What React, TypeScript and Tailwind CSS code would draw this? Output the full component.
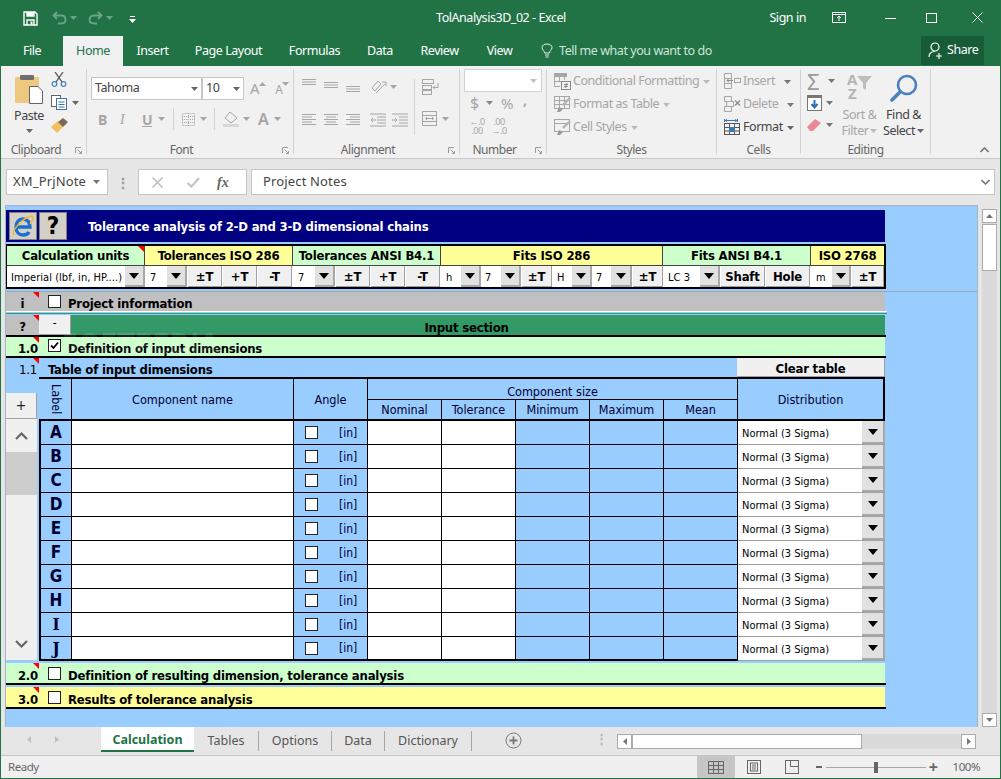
import { ReactNode } from 'react';

const uiFont = "font-['Noto_Sans',sans-serif] tracking-[-0.45px]";
const sheetFont = "font-['DejaVu_Sans',sans-serif] font-stretch-condensed tracking-[-0.2px]";

const OFF = '#a6a6a6';

function Caret({ color = '#777', className = '' }: { color?: string; className?: string }) {
    return (
        <svg width="7" height="4" viewBox="0 0 7 4" className={className}>
            <polygon points="0,0 7,0 3.5,4" fill={color} />
        </svg>
    );
}

function Lines({ rows, color = OFF }: { rows: [number, number, number][]; color?: string }) {
    return (
        <svg width="16" height="14" viewBox="0 0 16 14">
            {rows.map(([x, y, w], i) => (
                <rect key={i} x={x} y={y} width={w} height="1" fill={color} />
            ))}
        </svg>
    );
}

function GridIcon({ color = OFF }: { color?: string }) {
    return (
        <svg width="16" height="16" viewBox="0 0 16 16" fill="none" stroke={color}>
            <rect x="0.5" y="2.5" width="15" height="12" />
            <path d="M0.5 6.5H15.5M0.5 10.5H15.5M5.5 2.5V14.5M10.5 2.5V14.5" />
        </svg>
    );
}

function CondIcon() {
    return (
        <svg width="17" height="17" viewBox="0 0 17 17" fill="none" stroke={OFF}>
            <rect x="0" y="0" width="13" height="4" fill={OFF} stroke="none" />
            <path d="M0.5 4V13.5H6M5.5 4V8M10.5 4V7M0.5 8.5H7" />
            <rect x="7.5" y="8.5" width="9" height="8" fill="#f1f1f1" stroke="#8a8a8a" />
            <path d="M10 11.5H14M10 13.5H14M13 10L11 15" stroke="#8a8a8a" />
        </svg>
    );
}

function TableBrushIcon() {
    return (
        <svg width="17" height="17" viewBox="0 0 17 17" fill="none" stroke={OFF}>
            <rect x="0.5" y="0.5" width="15" height="12" />
            <path d="M0.5 4.5H15.5M0.5 8.5H15.5M5.5 0.5V12.5M10.5 0.5V12.5" />
            <path d="M16 2L9 9" strokeWidth="2.4" stroke="#b5b5b5" />
            <polygon points="3,16 5,11 9,13 6,16" fill="#9a9a9a" stroke="none" />
        </svg>
    );
}

function CellStyleIcon() {
    return (
        <svg width="17" height="17" viewBox="0 0 17 17" fill="none" stroke={OFF}>
            <rect x="0.5" y="0.5" width="15" height="12" />
            <path d="M0.5 4.5H15.5" />
            <path d="M16 2L9 9" strokeWidth="2.4" stroke="#b5b5b5" />
            <polygon points="3,16 5,11 9,13 6,16" fill="#9a9a9a" stroke="none" />
        </svg>
    );
}

function InsertIcon() {
    return (
        <svg width="17" height="17" viewBox="0 0 17 17" fill="none" stroke={OFF}>
            <path d="M0.5 0.5H7.5V5.5H0.5ZM0.5 5.5V10.5H7.5V5.5M0.5 10.5V15.5H7.5V10.5" />
            <rect x="10.5" y="5.5" width="6" height="4" />
            <path d="M9 7.5H3M5 5.5L3 7.5L5 9.5" stroke="#8a8a8a" />
        </svg>
    );
}

function DeleteIcon() {
    return (
        <svg width="17" height="17" viewBox="0 0 17 17" fill="none" stroke={OFF}>
            <path d="M0.5 0.5H7.5V5.5H0.5ZM2.5 5.5H9.5V10.5H2.5ZM0.5 10.5H7.5V15.5H0.5Z" />
            <path d="M11 4.5L16 9.5M16 4.5L11 9.5" stroke="#8a8a8a" strokeWidth="1.3" />
        </svg>
    );
}

function FormatIcon() {
    return (
        <svg width="17" height="17" viewBox="0 0 17 17" fill="none" stroke="#555">
            <path d="M0.5 0V3M13.5 0V3M1 1.5H13M3 0.5L1 1.5L3 2.5M11 0.5L13 1.5L11 2.5" stroke="#3d78b5" />
            <rect x="0.5" y="4.5" width="15" height="11" />
            <path d="M0.5 8.5H15.5M0.5 12H15.5M5.5 4.5V15.5M10.5 4.5V15.5" />
            <rect x="5" y="8" width="6" height="5" fill="#3d78b5" stroke="none" />
        </svg>
    );
}

function Launcher() {
    return (
        <svg width="7" height="7" viewBox="0 0 7 7" fill="none" stroke="#9a9a9a" className="absolute right-[4px] top-[5px]">
            <path d="M0.5 6V0.5H6" />
            <path d="M2.5 2.5L6 6M6.5 4V6.5H4" />
        </svg>
    );
}

function Group({ w, label, launcher, children }: { w: string; label: string; launcher?: boolean; children: ReactNode }) {
    return (
        <div className={`${w} h-[85px] mt-[3px] border-r border-[#d2d2d2] flex flex-col shrink-0`}>
            <div className="flex-1 min-h-0">{children}</div>
            <div className={`relative h-[16px] -mb-[4px] text-center text-[12px] leading-[16px] text-[#666] ${launcher ? 'pr-[17px]' : ''}`}>
                {label}
                {launcher && <Launcher />}
            </div>
        </div>
    );
}

function TitleBar() {
    return (
        <div className="h-[36px] bg-[#217346] flex items-center text-white shrink-0">
            <div className="w-[435px] flex items-center pl-[22px]">
                <svg width="15" height="15" viewBox="0 0 15 15" fill="none" stroke="#fff" strokeWidth="1.4">
                    <path d="M1 1H12L14 3V14H1Z" />
                    <path d="M4 1V5H11V1" fill="#fff" />
                    <path d="M4 14V9H11V14" />
                    <rect x="7.5" y="10.5" width="2" height="3" fill="#fff" stroke="none" />
                </svg>
                <svg width="15" height="14" viewBox="0 0 15 14" fill="none" stroke="#6ca489" strokeWidth="1.8" className="ml-[14px]">
                    <path d="M5 1L1.5 4.5L5 8M2 4.5H9C15 4.5 15 12.5 9 12.5H6" />
                </svg>
                <Caret color="#6ca489" className="ml-[3px]" />
                <svg width="15" height="14" viewBox="0 0 15 14" fill="none" stroke="#6ca489" strokeWidth="1.8" className="ml-[11px]">
                    <path d="M10 1L13.5 4.5L10 8M13 4.5H6C0 4.5 0 12.5 6 12.5H9" />
                </svg>
                <Caret color="#6ca489" className="ml-[3px]" />
                <svg width="7" height="7" viewBox="0 0 7 7" className="ml-[16px] mt-[2px]">
                    <rect x="1" y="0" width="5" height="1" fill="#fff" />
                    <polygon points="0,3 7,3 3.5,7" fill="#fff" />
                </svg>
            </div>
            <span className="text-[12.5px]">TolAnalysis3D_02 - Excel</span>
            <span className="ml-auto text-[12.5px]">Sign in</span>
            <svg width="14" height="11" viewBox="0 0 14 11" fill="none" stroke="#fff" className="ml-[26px] mb-[2px]">
                <rect x="0.5" y="0.5" width="13" height="10" />
                <path d="M0.5 2.5H13.5M7 9V4.5M5 6L7 4L9 6" />
            </svg>
            <div className="w-[11px] h-px bg-white ml-[39px]" />
            <div className="w-[11px] h-[10px] border border-white ml-[30px] mb-[1px]" />
            <svg width="11" height="11" viewBox="0 0 11 11" stroke="#fff" className="ml-[35px] mr-[17px] mb-[1px]">
                <path d="M0.5 0.5L10.5 10.5M10.5 0.5L0.5 10.5" />
            </svg>
        </div>
    );
}

function TabsBar() {
    const tabs: [string, string][] = [
        ['Insert', 'w-[59px]'],
        ['Page Layout', 'w-[93px]'],
        ['Formulas', 'w-[79px]'],
        ['Data', 'w-[52px]'],
        ['Review', 'w-[67px]'],
        ['View', 'w-[53px]'],
    ];
    return (
        <div className="h-[30px] bg-[#217346] flex text-white text-[12.5px] leading-[30px] shrink-0">
            <div className="w-[62px] text-center">File</div>
            <div className="w-[60px] text-center bg-[#f1f1f1] text-[#217346]">Home</div>
            {tabs.map(([t, w]) => (
                <div key={t} className={`${w} text-center`}>{t}</div>
            ))}
            <svg width="12" height="15" viewBox="0 0 12 15" fill="none" stroke="#e4eee9" className="ml-[15px] mt-[7px]">
                <path d="M3.5 10C3.5 7.5 1 7 1 4.5C1 2.5 3 1 6 1C9 1 11 2.5 11 4.5C11 7 8.5 7.5 8.5 10Z" />
                <path d="M4 12H8M4.5 14H7.5" />
            </svg>
            <span className="ml-[6px] text-[#cfe3d9]">Tell me what you want to do</span>
            <div className="ml-auto mr-[16px] w-[63px] h-[29px] bg-[#185c37] flex items-center pl-[7px] gap-[3px] leading-none">
                <svg width="16" height="17" viewBox="0 0 16 17" fill="none" stroke="#fff" strokeWidth="1.2">
                    <circle cx="7" cy="5" r="4" />
                    <path d="M1 15C1 11 4 9.5 7 9.5M11 11V17M8 14H14" />
                </svg>
                Share
            </div>
        </div>
    );
}

function ClipboardGroup() {
    return (
        <div className="flex">
            <div className="ml-[11px] mt-[5px] w-[30px] flex flex-col items-center">
                <svg width="28" height="30" viewBox="0 0 28 30">
                    <rect x="0" y="3" width="24" height="26" rx="1" fill="#edc87e" />
                    <rect x="5" y="1" width="14" height="5" rx="1" fill="#6f6f6f" />
                    <path d="M14.5 12.5H23L27.5 17V29.5H14.5Z" fill="#fff" stroke="#666" />
                </svg>
                <span className="mt-[3px] text-[12.5px] leading-[17px] text-[#444]">Paste</span>
                <Caret color="#666" className="mt-[5px]" />
            </div>
            <div className="ml-[7px] mt-[3px] flex flex-col">
                <svg width="16" height="15" viewBox="0 0 16 15" fill="none" stroke="#4b88c7" strokeWidth="1.3">
                    <circle cx="3.5" cy="12" r="2.3" />
                    <circle cx="12.5" cy="12" r="2.3" />
                    <path d="M5 10L12 0M11 10L4 0" stroke="#555" />
                </svg>
                <div className="flex items-center mt-[8px]">
                    <svg width="16" height="15" viewBox="0 0 16 15" fill="#fff" stroke="#666">
                        <rect x="0.5" y="0.5" width="9" height="11" />
                        <rect x="5.5" y="3.5" width="10" height="11" stroke="#3d6fa8" />
                        <path d="M7.5 7H13.5M7.5 9.5H13.5M7.5 12H13.5" stroke="#3d6fa8" />
                    </svg>
                    <Caret color="#666" className="ml-[5px]" />
                </div>
                <svg width="17" height="15" viewBox="0 0 17 15" className="mt-[8px]">
                    <polygon points="0,9 7,3 12,9 6,15" fill="#f0c060" />
                    <polygon points="7,4 12,0 17,4 12,9" fill="#7a6a55" />
                </svg>
            </div>
        </div>
    );
}

function FontGroup() {
    return (
        <div className="pl-[4px] pt-[8px]">
            <div className="flex items-center">
                <div className="w-[111px] h-[23px] bg-white border border-[#c6c6c6] flex items-center justify-between px-[3px] text-[12.5px] text-[#444]">
                    Tahoma
                    <Caret color="#666" />
                </div>
                <div className="w-[42px] h-[23px] bg-white border border-[#c6c6c6] flex items-center justify-between px-[3px] text-[12.5px] text-[#444]">
                    10
                    <Caret color="#666" />
                </div>
                <span className="ml-[6px] text-[15px] leading-none text-[#a6a6a6]">A</span>
                <Caret color={OFF} className="mb-[10px] rotate-180" />
                <span className="ml-[9px] text-[12px] leading-none text-[#a6a6a6] mt-[2px]">A</span>
                <Caret color={OFF} className="mb-[10px]" />
            </div>
            <div className="flex items-center mt-[9px] text-[#a6a6a6] h-[20px]">
                <span className="ml-[7px] w-[22px] text-[14px] font-bold">B</span>
                <span className="w-[22px] text-[14px] italic font-['Liberation_Serif',serif]">I</span>
                <span className="w-[16px] text-[14px] underline font-bold">U</span>
                <Caret color={OFF} />
                <div className="ml-[8px] w-px h-[22px] bg-[#d2d2d2]" />
                <svg width="13" height="13" viewBox="0 0 13 13" fill="none" stroke={OFF} strokeDasharray="1 1" className="ml-[8px]">
                    <rect x="0.5" y="0.5" width="12" height="12" />
                    <path d="M0 6.5H13M6.5 0V13M0 3.5H13M0 9.5H13" />
                </svg>
                <Caret color={OFF} className="ml-[5px]" />
                <div className="ml-[7px] w-px h-[22px] bg-[#d2d2d2]" />
                <svg width="16" height="16" viewBox="0 0 16 16" fill="none" stroke={OFF} className="ml-[8px]">
                    <path d="M7 1L14 7L8 12L2 7Z" />
                    <rect x="0" y="13" width="16" height="3" fill="#d8d8d8" stroke="none" />
                </svg>
                <Caret color={OFF} className="ml-[4px]" />
                <span className="ml-[8px] text-[16px] font-semibold leading-none">A</span>
                <Caret color={OFF} className="ml-[6px]" />
            </div>
        </div>
    );
}

function AlignmentGroup() {
    const L = (y: number, w: number[]) => w.map((v, i) => [0, y + i * 2.5, v] as [number, number, number]);
    return (
        <div className="pl-[8px] pt-[10px] flex">
            <div className="flex flex-col">
                <div className="flex gap-[6px] items-start h-[20px]">
                    <Lines rows={L(0, [14, 14, 14])} />
                    <Lines rows={L(3, [14, 14, 14])} />
                    <Lines rows={L(7, [14, 14, 14])} />
                    <svg width="16" height="16" viewBox="0 0 16 16" fill="none" stroke={OFF} className="ml-[3px]">
                        <path d="M1 9L7 2L10 5L4 12ZM5 14L14 5M11 3H15V7" />
                    </svg>
                    <Caret color={OFF} className="mt-[6px] -ml-[3px]" />
                </div>
                <div className="flex gap-[6px] items-center mt-[14px]">
                    <Lines rows={L(1, [14, 10, 14, 10, 14])} />
                    <Lines rows={[[0, 1, 14], [2, 3.5, 10], [0, 6, 14], [2, 8.5, 10], [0, 11, 14]]} />
                    <Lines rows={[[0, 1, 14], [4, 3.5, 10], [0, 6, 14], [4, 8.5, 10], [0, 11, 14]]} />
                    <svg width="16" height="14" viewBox="0 0 16 14" fill="none" stroke={OFF} className="ml-[2px]">
                        <path d="M0 1H16M7 4H16M7 7H16M7 10H16M0 13H16M6 7H1M3 5L1 7L3 9" />
                    </svg>
                    <svg width="16" height="14" viewBox="0 0 16 14" fill="none" stroke={OFF}>
                        <path d="M0 1H16M7 4H16M7 7H16M7 10H16M0 13H16M0 7H5M3 5L5 7L3 9" />
                    </svg>
                </div>
            </div>
            <div className="ml-[6px] w-px h-[56px] bg-[#d2d2d2]" />
            <div className="ml-[7px] flex flex-col">
                <svg width="17" height="16" viewBox="0 0 17 16" fill="none" stroke={OFF}>
                    <rect x="0.5" y="0.5" width="11" height="4" />
                    <rect x="0.5" y="6.5" width="9" height="4" />
                    <rect x="0.5" y="11.5" width="9" height="4" />
                    <path d="M16 4V8.5H11M13 6.5L11 8.5L13 10.5" />
                </svg>
                <div className="flex items-center mt-[16px]">
                    <svg width="15" height="15" viewBox="0 0 15 15" fill="none" stroke={OFF}>
                        <rect x="0.5" y="0.5" width="14" height="14" />
                        <path d="M0 4.5H15M0 10.5H15M4 7.5H11M5 6L3.5 7.5L5 9M10 6L11.5 7.5L10 9" />
                    </svg>
                    <Caret color={OFF} className="ml-[5px]" />
                </div>
            </div>
        </div>
    );
}

function NumberGroup() {
    return (
        <div className="pl-[4px]">
            <div className="w-[78px] h-[23px] bg-white border border-[#d2d2d2] flex items-center justify-end pr-[4px]">
                <Caret color="#c0c0c0" />
            </div>
            <div className="flex items-center h-[22px] text-[#a6a6a6] text-[16px] leading-none">
                <span className="ml-[6px] w-[16px]">$</span>
                <Caret color="#888" />
                <span className="ml-[8px] w-[22px] text-[15px]">%</span>
                <span className="text-[14px] font-bold -mt-[6px]">,</span>
            </div>
            <div className="flex mt-[3px] h-[20px] text-[#a6a6a6] text-[9px] leading-[9px]">
                <div className="ml-[2px] w-[22px] text-center">←.0<br />.00</div>
                <div className="w-[22px] text-center">.00<br />→.0</div>
            </div>
        </div>
    );
}

function StyleRow({ text, icon, color = OFF, caret = '#bbb', gap = '' }: { text: string; icon: ReactNode; color?: string; caret?: string; gap?: string }) {
    return (
        <div className="h-[23px] flex items-center text-[12.5px]" style={{ color }}>
            {icon}
            <span className="ml-[2px]">{text}</span>
            <Caret color={caret} className={gap || 'ml-[4px]'} />
        </div>
    );
}

function StylesGroup() {
    return (
        <div className="pl-[7px] pt-[1px]">
            <StyleRow text="Conditional Formatting" icon={<CondIcon />} />
            <StyleRow text="Format as Table" icon={<TableBrushIcon />} />
            <StyleRow text="Cell Styles" icon={<CellStyleIcon />} />
        </div>
    );
}

function CellsGroup() {
    return (
        <div className="pl-[7px] pt-[1px]">
            <StyleRow text="Insert" icon={<InsertIcon />} caret="#777" gap="ml-[9px]" />
            <StyleRow text="Delete" icon={<DeleteIcon />} caret="#777" gap="ml-[9px]" />
            <StyleRow text="Format" color="#444" icon={<FormatIcon />} caret="#666" />
        </div>
    );
}

function EditingGroup() {
    return (
        <div className="flex">
            <div className="ml-[6px] mt-[3px] flex flex-col w-[32px]">
                <div className="flex items-center h-[17px] gap-[5px]">
                    <span className="text-[22px] leading-none text-[#9a9a9a] w-[16px]">Σ</span>
                    <Caret color="#777" />
                </div>
                <div className="flex items-center mt-[6px] gap-[4px]">
                    <svg width="15" height="16" viewBox="0 0 15 16">
                        <rect x="0.5" y="0.5" width="14" height="15" fill="#fff" stroke="#777" />
                        <rect x="0" y="0" width="15" height="3" fill="#777" />
                        <path d="M7.5 5V12M4.5 9L7.5 12.5L10.5 9" fill="none" stroke="#2f6fb0" strokeWidth="2" />
                    </svg>
                    <Caret color="#777" />
                </div>
                <div className="flex items-center mt-[8px] gap-[5px]">
                    <svg width="14" height="12" viewBox="0 0 14 12">
                        <polygon points="0,8 8,0 14,4 6,12 3,12" fill="#ea8a96" />
                    </svg>
                    <Caret color="#777" />
                </div>
            </div>
            <div className="w-[43px] -ml-[1px] flex flex-col items-center text-[12.5px] leading-[16px] text-[#a6a6a6]">
                <div className="flex h-[32px] mt-[3px]">
                    <span className="text-[15px] leading-[14px] font-bold text-center text-[#b5b5b5]">A<br />Z</span>
                    <svg width="15" height="14" viewBox="0 0 15 14" className="mt-[4px]">
                        <polygon points="0,0 15,0 9,7 9,14 6,12 6,7" fill="#bdbdbd" />
                    </svg>
                </div>
                <span className="mt-[3px]">Sort &amp;</span>
                <span className="flex items-center gap-[2px]">Filter<Caret color="#bbb" /></span>
            </div>
            <div className="ml-[1px] w-[43px] flex flex-col items-center text-[12.5px] leading-[16px] text-[#444]">
                <svg width="28" height="28" viewBox="0 0 28 28" fill="none" stroke="#4a80bd" className="mt-[5px] mb-[5px]">
                    <circle cx="17" cy="11" r="9" strokeWidth="2.6" />
                    <path d="M10 18L2 26" strokeWidth="3.6" strokeLinecap="round" />
                </svg>
                <span>Find &amp;</span>
                <span className="flex items-center gap-[2px]">Select<Caret color="#666" /></span>
            </div>
        </div>
    );
}

function Ribbon() {
    return (
        <div className="h-[93px] bg-[#f1f1f1] border-b border-[#c8c8c8] flex shrink-0 pl-[2px]">
            <Group w="w-[84px]" label="Clipboard" launcher><ClipboardGroup /></Group>
            <Group w="w-[207px]" label="Font" launcher><FontGroup /></Group>
            <Group w="w-[166px]" label="Alignment" launcher><AlignmentGroup /></Group>
            <Group w="w-[87px]" label="Number" launcher><NumberGroup /></Group>
            <Group w="w-[170px]" label="Styles"><StylesGroup /></Group>
            <Group w="w-[84px]" label="Cells"><CellsGroup /></Group>
            <Group w="w-[130px]" label="Editing"><EditingGroup /></Group>
            <div className="flex-1 flex items-end justify-end pr-[11px] pb-[5px]">
                <svg width="9" height="6" viewBox="0 0 9 6" fill="none" stroke="#777" strokeWidth="1.6">
                    <path d="M0.5 5L4.5 1L8.5 5" />
                </svg>
            </div>
        </div>
    );
}

function FormulaBar() {
    return (
        <div className="h-[46px] bg-[#e6e6e6] flex items-start pt-[10px] pl-[5px] shrink-0 text-[#444] tracking-[0.15px]">
            <div className="w-[102px] h-[26px] bg-white border border-[#c6c6c6] flex items-center justify-between pl-[6px] pr-[7px] text-[13px]">
                XM_PrjNote
                <Caret color="#777" />
            </div>
            <div className="w-[30px] h-[26px] flex items-center justify-center text-[#999] text-[14px] font-bold tracking-tighter">⋮</div>
            <div className="w-[109px] h-[26px] bg-white border border-[#c6c6c6] flex items-center text-[#c4c4c4]">
                <svg width="11" height="11" viewBox="0 0 11 11" stroke="#c4c4c4" strokeWidth="1.6" className="ml-[13px]">
                    <path d="M0.5 0.5L10.5 10.5M10.5 0.5L0.5 10.5" />
                </svg>
                <svg width="13" height="11" viewBox="0 0 13 11" fill="none" stroke="#c4c4c4" strokeWidth="2.2" className="ml-[24px]">
                    <path d="M0.5 6L4.5 9.5L12 1" />
                </svg>
                <span className="ml-[17px] text-[14px] italic font-bold font-['Liberation_Serif',serif] text-[#666]">fx</span>
            </div>
            <div className="ml-[4px] w-[744px] h-[26px] bg-white border border-[#c6c6c6] flex items-center justify-between pl-[11px] pr-[4px] text-[13px]">
                Project Notes
                <svg width="9" height="6" viewBox="0 0 9 6" fill="none" stroke="#777" strokeWidth="1.6">
                    <path d="M0.5 1L4.5 5L8.5 1" />
                </svg>
            </div>
        </div>
    );
}

function RedMark() {
    return (
        <svg width="6" height="6" viewBox="0 0 6 6" className="absolute right-0 top-0">
            <polygon points="0,0 6,0 6,6" fill="#ff0000" />
        </svg>
    );
}

function Arrow({ w }: { w: string }) {
    return (
        <div className={`${w} h-full bg-[#e1e1e1] border-r-2 border-b-2 border-[#a8a8a8] flex items-center justify-center shrink-0`}>
            <svg width="10" height="6" viewBox="0 0 10 6">
                <polygon points="0,0 10,0 5,6" fill="#000" />
            </svg>
        </div>
    );
}

function Val({ w, t }: { w: string; t: string }) {
    return <div className={`${w} h-full pl-[4px] text-[11px] leading-[23px] tracking-[0.05px] text-[#000] whitespace-nowrap overflow-hidden shrink-0`}>{t}</div>;
}

function Btn({ w, t }: { w: string; t: string }) {
    return (
        <div className={`${w} h-full bg-[#f0f0f0] border-r border-b border-[#a0a0a0] text-center font-bold text-[13px] leading-[22px] shrink-0`}>
            {t}
        </div>
    );
}

function UnitsFrame() {
    const heads: [string, string, string, boolean][] = [
        ['Calculation units', 'w-[138px]', 'bg-[#ccffcc]', true],
        ['Tolerances ISO 286', 'w-[148px]', 'bg-[#ffff99]', false],
        ['Tolerances ANSI B4.1', 'w-[148px]', 'bg-[#ccffcc]', false],
        ['Fits ISO 286', 'w-[222px]', 'bg-[#ffff99]', false],
        ['Fits ANSI B4.1', 'w-[148px]', 'bg-[#ccffcc]', false],
        ['ISO 2768', 'w-[73px]', 'bg-[#ffff99]', false],
    ];
    return (
        <div className="mt-[2px] w-[880px] border-t-2 border-b-2 border-l border-r-2 border-black">
            <div className="flex h-[20px]">
                {heads.map(([t, w, bg, mark], i) => (
                    <div key={t} className={`${w} ${bg} relative text-center font-bold text-[13px] leading-[20px] whitespace-nowrap border-b border-[#444] ${i < 5 ? 'border-r' : ''}`}>
                        {t}
                        {mark && <RedMark />}
                    </div>
                ))}
            </div>
            <div className="flex h-[21px] bg-white">
                <Val w="w-[118px]" t="Imperial (lbf, in, HP....)" />
                <Arrow w="w-[20px]" />
                <div className="w-px" />
                <Val w="w-[21px]" t="7" /><Arrow w="w-[20px]" />
                <div className="w-px" /><Btn w="w-[34px]" t="±T" />
                <div className="w-px" /><Btn w="w-[34px]" t="+T" />
                <div className="w-px" /><Btn w="w-[34px]" t="-T" />
                <div className="w-[2px]" />
                <Val w="w-[21px]" t="7" /><Arrow w="w-[20px]" />
                <div className="w-px" /><Btn w="w-[34px]" t="±T" />
                <div className="w-px" /><Btn w="w-[34px]" t="+T" />
                <div className="w-px" /><Btn w="w-[34px]" t="-T" />
                <div className="w-[2px]" />
                <Val w="w-[19px]" t="h" /><Arrow w="w-[20px]" />
                <Val w="w-[20px]" t="7" /><Arrow w="w-[20px]" />
                <div className="w-px" /><Btn w="w-[30px]" t="±T" />
                <div className="w-px" />
                <Val w="w-[19px]" t="H" /><Arrow w="w-[20px]" />
                <Val w="w-[19px]" t="7" /><Arrow w="w-[21px]" />
                <div className="w-px" /><Btn w="w-[30px]" t="±T" />
                <div className="w-px" />
                <Val w="w-[36px]" t="LC 3" /><Arrow w="w-[20px]" />
                <div className="w-px" /><Btn w="w-[44px]" t="Shaft" />
                <div className="w-px" /><Btn w="w-[44px]" t="Hole" />
                <div className="w-[2px]" />
                <Val w="w-[20px]" t="m" /><Arrow w="w-[19px]" />
                <div className="w-px" /><Btn w="w-[32px]" t="±T" />
            </div>
        </div>
    );
}

function Check({ on }: { on?: boolean }) {
    return (
        <div className="w-[13px] h-[13px] bg-white border border-[#222] flex items-center justify-center shrink-0">
            {on && (
                <svg width="9" height="9" viewBox="0 0 9 9" fill="none" stroke="#000" strokeWidth="1.8">
                    <path d="M1 4.5L3.5 7L8 1.5" />
                </svg>
            )}
        </div>
    );
}

function SectionRow({ num, title, bg, checked }: { num: string; title: string; bg: string; checked?: boolean }) {
    return (
        <div className={`w-[879px] ${bg} flex h-[20px] items-center font-bold text-[13px]`}>
            <div className="relative w-[33px] h-full text-right pr-[1px] leading-[25px]">
                {num}
                <RedMark />
            </div>
            <div className="ml-[9px]"><Check on={checked} /></div>
            <span className="ml-[7px] mt-[5px]">{title}</span>
        </div>
    );
}

const letters = ['A', 'B', 'C', 'D', 'E', 'F', 'G', 'H', 'I', 'J'];

function TableRow({ l, last }: { l: string; last: boolean }) {
    const line = last ? 'border-b-2' : 'border-b';
    const cell = `h-full border-r border-black ${line} border-b-black`;
    return (
        <div className="flex h-[24px]">
            <div className={`${cell} w-[31px] bg-[#99ccff] text-center text-[17px] leading-[23px] font-bold ${l === 'I' || l === 'J' ? "font-['DejaVu_Serif',serif]" : ''}`}>{l}</div>
            <div className={`${cell} w-[222px] bg-white`} />
            <div className={`${cell} w-[74px] bg-[#99ccff] flex items-center pl-[11px] text-[12px] text-[#000040]`}>
                <Check />
                <span className="ml-[21px]">[in]</span>
            </div>
            <div className={`${cell} w-[74px] bg-white`} />
            <div className={`${cell} w-[74px] bg-white`} />
            <div className={`${cell} w-[74px] bg-[#99ccff]`} />
            <div className={`${cell} w-[74px] bg-[#99ccff]`} />
            <div className={`${cell} w-[74px] bg-[#99ccff]`} />
            <div className="w-[147px] h-full flex bg-white border-b border-[#a0a0a0]">
                <span className="w-[124px] pl-[4px] text-[11px] leading-[25px] tracking-normal text-[#000]">Normal (3 Sigma)</span>
                <Arrow w="w-[23px]" />
            </div>
        </div>
    );
}

function InputTable() {
    return (
        <div className="w-[846px] border-l-2 border-black text-[12.5px] tracking-normal text-[#000030]">
            <div className="w-[846px] -ml-[2px] pl-[2px] border-t-2 border-b-2 border-r-2 border-black h-[44px] grid grid-cols-[31px_222px_74px_74px_74px_74px_74px_74px_1fr] grid-rows-[21px_19px] bg-[#99ccff] text-center">
                <div className="row-span-2 border-r border-black flex items-center justify-center">
                    <span className="[writing-mode:vertical-rl]">Label</span>
                </div>
                <div className="row-span-2 border-r border-black leading-[42px]">Component name</div>
                <div className="row-span-2 border-r border-black leading-[42px]">Angle</div>
                <div className="col-span-5 border-r border-b border-black leading-[26px]">Component size</div>
                <div className="row-span-2 leading-[42px]">Distribution</div>
                <div className="border-r border-black leading-[19px]">Nominal</div>
                <div className="border-r border-black leading-[19px]">Tolerance</div>
                <div className="border-r border-black leading-[19px]">Minimum</div>
                <div className="border-r border-black leading-[19px]">Maximum</div>
                <div className="border-r border-black leading-[19px]">Mean</div>
            </div>
            {letters.map((l, i) => (
                <TableRow key={l} l={l} last={i === letters.length - 1} />
            ))}
        </div>
    );
}

function SideScroll() {
    return (
        <div className="w-[31px] mr-[2px] pt-[16px] flex flex-col shrink-0 h-[283px]">
            <div className="h-[26px] bg-[#f0f0f0] border-r border-b border-[#a0a0a0] text-center text-[14px] leading-[24px] text-[#222]">+</div>
            <div className="flex-1 bg-[#f0f0f0] flex flex-col">
                <div className="h-[33px] flex items-center justify-center">
                    <svg width="13" height="8" viewBox="0 0 13 8" fill="none" stroke="#666" strokeWidth="2.2">
                        <path d="M1 7L6.5 1.5L12 7" />
                    </svg>
                </div>
                <div className="h-[43px] bg-[#cdcdcd]" />
                <div className="flex-1 flex items-end justify-center pb-[12px]">
                    <svg width="13" height="8" viewBox="0 0 13 8" fill="none" stroke="#666" strokeWidth="2.2">
                        <path d="M1 1L6.5 6.5L12 1" />
                    </svg>
                </div>
            </div>
        </div>
    );
}

function SheetContent() {
    return (
        <div className={`${sheetFont} relative h-full text-[#000] bg-[#99ccff] overflow-hidden`}>
            <div className="pt-[4px]">
                <div className="w-[879px] h-[32px] bg-[#000080] flex items-center pl-[3px]">
                    <div className="w-[28px] h-[28px] bg-[#d4d0c8] border border-[#808080] flex items-center justify-center">
                        <svg width="24" height="24" viewBox="0 0 24 24" fill="none">
                            <path d="M5 13H19C19 8 16 5 12 5C8 5 5 8 5 13C5 18 8 21 12 21C15 21 17 20 18 18" stroke="#1a6fd6" strokeWidth="3.4" />
                            <path d="M3 21C0 17 12 3 21 2C24 4 20 8 19 10" stroke="#f5b921" strokeWidth="1.4" />
                        </svg>
                    </div>
                    <div className="ml-[2px] w-[28px] h-[28px] bg-[#d4d0c8] border border-[#808080] text-center text-[24px] font-bold leading-[27px]">?</div>
                    <span className="ml-[21px] mt-[2px] text-[13px] font-bold text-white">Tolerance analysis of 2-D and 3-D dimensional chains</span>
                </div>
                <UnitsFrame />
                <div className="mt-[2px] h-px bg-[#9aa8b4]" />
                <div className="w-[879px] h-[19px] bg-[#c0c0c0] flex items-center font-bold text-[13px]">
                    <div className="relative w-[33px] h-full text-center leading-[23px]">
                        i
                        <RedMark />
                    </div>
                    <div className="ml-[9px]"><Check /></div>
                    <span className="ml-[7px] mt-[4px]">Project information</span>
                </div>
                <div className="w-[881px] h-px bg-white" />
                <div className="w-[881px] h-px mt-px bg-[#339966]" />
                <div className="w-[879px] h-[20px] mt-px flex bg-[#339966] font-bold text-[13px]">
                    <div className="relative w-[33px] h-full bg-[#c0c0c0] text-center leading-[24px]">
                        ?
                        <RedMark />
                    </div>
                    <div className="w-[32px] h-full bg-[#f0f0f0] border-r border-b border-[#a0a0a0] text-center font-normal text-[12px] leading-[16px]">-</div>
                    <div className="flex-1 text-center leading-[26px] pr-[23px]">Input section</div>
                </div>
                <div className="w-[880px] h-[2px] bg-black" />
                <div className="w-[879px] h-[19px] bg-[#ccffcc] flex items-center font-bold text-[13px]">
                    <div className="relative w-[33px] h-full text-right pr-[1px] leading-[23px]">
                        1.0
                        <RedMark />
                    </div>
                    <div className="ml-[9px] -mt-[3px]"><Check on /></div>
                    <span className="ml-[7px] mt-[4px]">Definition of input dimensions</span>
                </div>
                <div className="w-[880px] h-[2px] bg-black" />
                <div className="w-[880px] h-[19px] flex items-center text-[13px]">
                    <div className="relative w-[33px] h-full text-right pr-[2px] leading-[23px] font-normal">
                        1.1
                        <RedMark />
                    </div>
                    <span className="ml-[9px] mt-[4px] font-bold">Table of input dimensions</span>
                    <div className="ml-auto w-[148px] mr-px h-full bg-[#f0f0f0] border-r border-b border-[#a0a0a0] text-center font-bold leading-[22px]">Clear table</div>
                </div>
                <div className="flex">
                    <SideScroll />
                    <InputTable />
                </div>
                <div className="mt-[2px]">
                    <SectionRow num="2.0" title="Definition of resulting dimension, tolerance analysis" bg="bg-[#ccffcc]" />
                </div>
                <div className="w-[880px] h-[2px] bg-black" />
                <div className="mt-[2px]">
                    <SectionRow num="3.0" title="Results of tolerance analysis" bg="bg-[#ffff99]" />
                </div>
                <div className="w-[880px] h-[2px] bg-black" />
            </div>
            {/* watermark from the screenshot, sits over the rows */}
            <div className="absolute left-[55px] top-[118px] text-[28px] font-bold text-white opacity-[0.12] pointer-events-none">SOFTPEDIA</div>
        </div>
    );
}

function VScroll() {
    return (
        <div className="w-[22px] pt-[4px] flex flex-col items-center shrink-0 bg-[#e6e6e6]">
            <div className="w-[15px] flex-1 bg-[#dadada] flex flex-col">
                <div className="h-[14px] bg-white border border-[#ababab] flex items-center justify-center">
                    <Caret color="#777" className="rotate-180" />
                </div>
                <div className="h-[47px] mt-px bg-white border border-[#ababab]" />
                <div className="flex-1" />
                <div className="h-[14px] bg-white border border-[#ababab] flex items-center justify-center">
                    <Caret color="#777" />
                </div>
            </div>
        </div>
    );
}

function SheetTabs() {
    const tabs: [string, string][] = [
        ['Tables', 'w-[65px]'],
        ['Options', 'w-[73px]'],
        ['Data', 'w-[53px]'],
        ['Dictionary', 'w-[87px]'],
    ];
    return (
        <div className="h-[28px] bg-[#e6e6e6] flex items-start text-[12.5px] text-[#555] shrink-0 tracking-normal">
            <div className="w-[100px] h-[24px] flex items-center pl-[26px] gap-[24px]">
                <svg width="4" height="7" viewBox="0 0 4 7"><polygon points="4,0 4,7 0,3.5" fill="#c0c0c0" /></svg>
                <svg width="4" height="7" viewBox="0 0 4 7"><polygon points="0,0 0,7 4,3.5" fill="#c0c0c0" /></svg>
            </div>
            <div className="w-[93px] h-[25px] bg-white border-b-[2px] border-[#217346] text-center font-bold text-[#217346] leading-[25px]">Calculation</div>
            {tabs.map(([t, w]) => (
                <div key={t} className={`${w} h-[20px] mt-[4px] border-r border-[#a6a6a6] text-center leading-[20px]`}>{t}</div>
            ))}
            <svg width="17" height="17" viewBox="0 0 17 17" fill="none" stroke="#777" className="ml-[33px] mt-[5px]">
                <circle cx="8.5" cy="8.5" r="7.5" />
                <path d="M8.5 4.5V12.5M4.5 8.5H12.5" strokeWidth="1.8" />
            </svg>
            <span className="ml-[73px] mt-[3px] text-[#b5b5b5] font-bold">⋮</span>
            <div className="ml-[9px] mt-[7px] w-[359px] h-[15px] bg-[#dadada] flex">
                <div className="w-[15px] h-full bg-white border border-[#ababab] flex items-center justify-center">
                    <svg width="4" height="7" viewBox="0 0 4 7"><polygon points="4,0 4,7 0,3.5" fill="#777" /></svg>
                </div>
                <div className="w-[230px] h-full bg-white border border-[#ababab]" />
                <div className="flex-1" />
                <div className="w-[15px] h-full bg-white border border-[#ababab] flex items-center justify-center">
                    <svg width="4" height="7" viewBox="0 0 4 7"><polygon points="0,0 0,7 4,3.5" fill="#777" /></svg>
                </div>
            </div>
        </div>
    );
}

function StatusBar() {
    return (
        <div className="h-[23px] bg-[#f0f0f0] border-t border-[#c6c6c6] flex items-center text-[11.5px] text-[#666] shrink-0">
            <span className="ml-[7px]">Ready</span>
            <div className="ml-auto w-[38px] h-full bg-[#c6c6c6] flex items-center justify-center">
                <GridIcon color="#666" />
            </div>
            <div className="w-[38px] flex justify-center">
                <svg width="14" height="14" viewBox="0 0 14 14" fill="none" stroke="#666">
                    <rect x="0.5" y="0.5" width="13" height="13" />
                    <rect x="3.5" y="3" width="7" height="8" />
                    <path d="M5 5H9M5 7H9M5 9H9" />
                </svg>
            </div>
            <div className="w-[38px] flex justify-center">
                <svg width="14" height="14" viewBox="0 0 14 14" fill="none" stroke="#666">
                    <rect x="0.5" y="0.5" width="13" height="13" />
                    <path d="M5.5 0.5V6.5H13.5" />
                </svg>
            </div>
            <div className="ml-[5px] w-[6px] h-[2px] bg-[#666]" />
            <div className="relative ml-[4px] w-[100px] h-px bg-[#a6a6a6]">
                <div className="absolute left-[48px] -top-[5px] w-[4px] h-[11px] bg-[#666]" />
            </div>
            <span className="ml-[3px] text-[16px] font-bold leading-none">+</span>
            <span className="ml-[15px] mr-[20px]">100%</span>
        </div>
    );
}

export default function App() {
    return (
        <div className={`${uiFont} w-[1001px] h-[779px] flex flex-col overflow-hidden border-x border-b border-[#217346] bg-[#e6e6e6]`}>
            <TitleBar />
            <TabsBar />
            <Ribbon />
            <FormulaBar />
            <div className="flex-1 min-h-0 flex pl-[4px]">
                <div className="w-[973px] border-l border-t border-r border-[#a3b4c4]">
                    <SheetContent />
                </div>
                <VScroll />
            </div>
            <SheetTabs />
            <StatusBar />
        </div>
    );
}
